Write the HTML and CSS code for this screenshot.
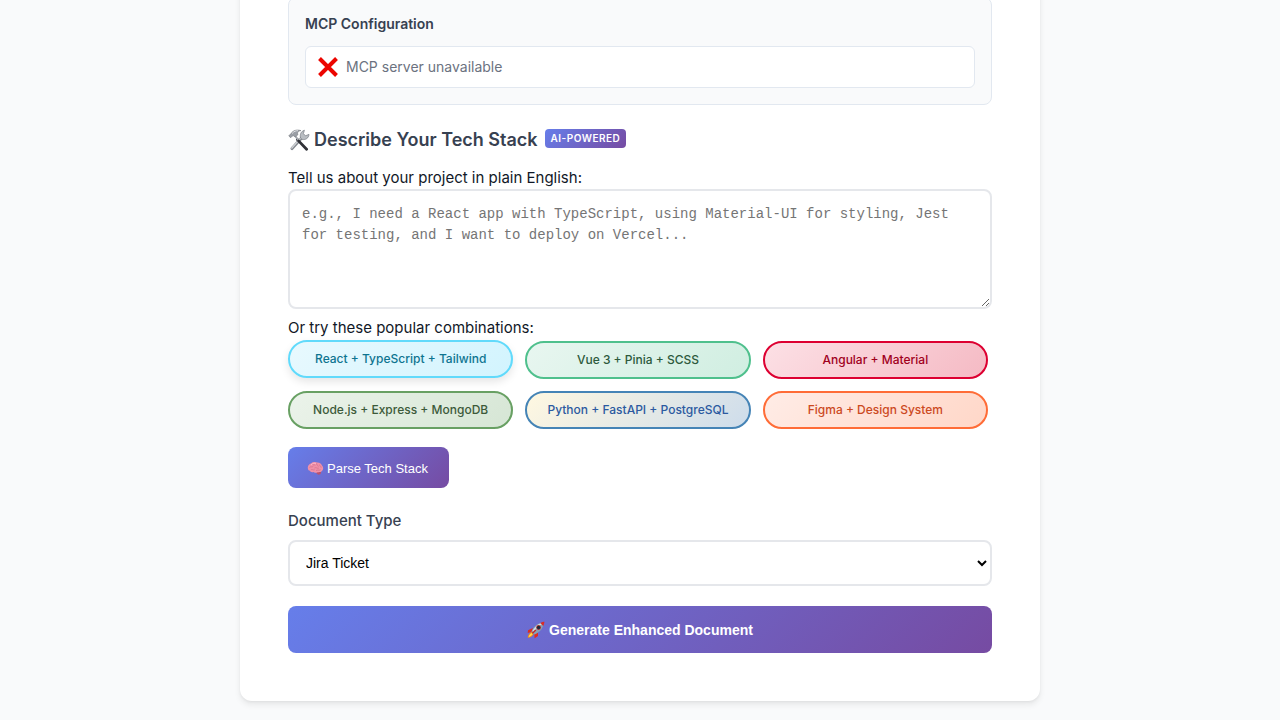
FILE: index.html
```html
<!DOCTYPE html>
<html lang="en">
<head>
<meta charset="utf-8">
<meta name="viewport" content="width=device-width, initial-scale=1">
<title>Document Generator</title>
<link rel="stylesheet" href="styles.css">
</head>
<body>
<main class="card">
  <section class="config">
    <h4 class="config-title">MCP Configuration</h4>
    <div class="status">
      <svg class="icon-cross" viewBox="0 0 22 22" aria-hidden="true"><path d="M2.5 2.5 L19.5 19.5 M19.5 2.5 L2.5 19.5" stroke="#ec0500" stroke-width="4" fill="none"/></svg>
      <span>MCP server unavailable</span>
    </div>
  </section>

  <h3 class="heading">
    <svg class="icon-tools" viewBox="0 0 22 22" aria-hidden="true">
      <path d="M4 19.6 L14 8.6" stroke="#85898f" stroke-width="3" stroke-linecap="round"/>
      <path d="M3.8 19 L13.6 8.2" stroke="#d3d6da" stroke-width="1.2" stroke-linecap="round"/>
      <path d="M12.6 9.2 C11.6 5.6 13 2.2 16.4 1.2 L15.4 4.6 L17.4 6.8 L21 5.4 C20.8 9 17.6 11.2 14.2 10.4 Z" fill="#b9bdc2" stroke="#777b82" stroke-width=".7"/>
      <path d="M9.4 10.6 L18.6 20.2" stroke="#303137" stroke-width="2.8" stroke-linecap="round"/>
      <path d="M7.2 7 L10.2 10.8" stroke="#a4a8ae" stroke-width="2"/>
      <path d="M.8 6.8 L3 4.6 C5 1.4 8.5 .3 13 1.6 C10.4 2 9.5 3 9.6 4.6 L10 5.6 L7.2 8 L5.6 6.8 L4.4 7 L2.6 8.8 Z" fill="#9a9ea5" stroke="#74787e" stroke-width=".6"/>
      <path d="M4 4.6 C6 2.2 8 1.6 10 1.7" stroke="#dfe1e4" stroke-width="1" fill="none"/>
    </svg>
    <span>Describe Your Tech Stack</span>
    <span class="badge">AI-POWERED</span>
  </h3>

  <label class="prompt" for="stack">Tell us about your project in plain English:</label>
  <textarea class="stack-input" id="stack" placeholder="e.g., I need a React app with TypeScript, using Material-UI for styling, Jest for testing, and I want to deploy on Vercel..."></textarea>

  <p class="prompt prompt-examples">Or try these popular combinations:</p>
  <div class="chips">
    <button type="button" class="chip chip-react">React + TypeScript + Tailwind</button>
    <button type="button" class="chip chip-vue">Vue 3 + Pinia + SCSS</button>
    <button type="button" class="chip chip-angular">Angular + Material</button>
    <button type="button" class="chip chip-node">Node.js + Express + MongoDB</button>
    <button type="button" class="chip chip-python">Python + FastAPI + PostgreSQL</button>
    <button type="button" class="chip chip-figma">Figma + Design System</button>
  </div>

  <button type="button" class="parse">
    <svg class="icon-brain" viewBox="0 0 17 15" aria-hidden="true">
      <path d="M9 11 L14 10.5 C14.5 12.5 13 13.8 11.3 13.8 L9.8 12.8 Z" fill="#b9526e"/>
      <path d="M1 8 C.2 5.6 1.8 3.2 4 2.5 C5.6 .9 8.6 .8 10.3 1.6 C12.8 1.5 14.6 3 15 4.6 C16.6 6.2 16.5 8.6 15.2 9.8 C14.2 11.4 12 11.2 10.6 11.2 C9.4 12.2 7.6 12 6.8 11 C4.8 11.6 3.2 11 2.9 9.8 C1.8 9.7 1.2 9 1 8 Z" fill="#f090a8"/>
      <path d="M2.5 6.5 C4 5 5 6.7 6.3 5.2 M5 3.2 C6 4.4 7.4 3.2 8.3 4.4 M9.6 2.3 C9 4 11.3 4 11.4 5.6 M12.6 3.6 C12.6 5 14.2 5.3 14.2 6.7 M7.4 7 C9 6 10 7.6 11.8 7.2 M3.8 9 C5.3 7.8 6.2 9.6 7.7 8.8 M9 9.6 C10.6 8.5 12 9.8 13.6 8.7" stroke="#cf6685" stroke-width=".6" fill="none"/>
      <path d="M4 4 C5.4 2.4 7.6 2 9 2.4" stroke="#ffc2cf" stroke-width=".8" fill="none"/>
    </svg>
    <span>Parse Tech Stack</span>
  </button>

  <label class="field-label" for="doctype">Document Type</label>
  <select class="doctype" id="doctype"><option>Jira Ticket</option></select>

  <button type="button" class="generate">
    <svg class="icon-rocket" viewBox="0 0 18 18" aria-hidden="true">
      <path d="M5.2 10.6 L6.8 12.8 C5.6 15.5 3 16.8 .8 17 C.6 14.6 2 11.8 5.2 10.6 Z" fill="#f5881f"/>
      <path d="M4.6 12 L5.7 13.3 C4.6 14.8 3 15.8 1.7 16 C1.9 14.4 3 12.8 4.6 12 Z" fill="#ffe14a"/>
      <path d="M6 7 L1 9.2 L.7 12 L5 10.8 Z" fill="#df2b20"/>
      <path d="M11 11.8 L11 15 L7.6 17.2 L7.3 12.8 Z" fill="#df2b20"/>
      <path d="M4.5 10.7 C6 6.4 10 2.8 14 1.8 L16.3 4.2 C15.2 8.4 11.5 12.2 7.2 13.4 Z" fill="#86a3b4"/>
      <path d="M5.6 9.6 C7.5 6 10.5 3.3 14 2.2 L15 3.2 C11.5 5 8.5 8 6.5 11.2 Z" fill="#cfdde4"/>
      <path d="M13.3 2 C14.8 1.1 16.2 .8 17.4 .8 C17.4 2.2 17 3.6 16.2 5 Z" fill="#d92b25"/>
      <circle cx="11.6" cy="6.5" r="2.4" fill="#b93135"/>
      <circle cx="11.6" cy="6.5" r="1.7" fill="#1c2b3d"/>
      <path d="M5.4 12.3 L8.8 9" stroke="#c02525" stroke-width="1.4"/>
    </svg>
    <span>Generate Enhanced Document</span>
  </button>
</main>
</body>
</html>
```
FILE: styles.css
```css
* { box-sizing: border-box; }

body {
  margin: 0;
  padding-bottom: 19px;
  background: #f9fafb;
  color: #111827;
  font: 16px/24px Inter, "Liberation Sans", sans-serif;
}

button { cursor: pointer; }
svg { flex: none; }

.card {
  display: flex;
  flex-direction: column;
  max-width: 800px;
  margin: -51px auto 0;
  padding: 48px;
  background: #fff;
  border-radius: 12px;
  box-shadow: 0 4px 6px rgba(0, 0, 0, .07), 0 1px 3px rgba(0, 0, 0, .05);
}

.config {
  padding: 16px;
  background: #f9fafb;
  border: 1px solid #e2e8f0;
  border-radius: 8px;
}

.config-title {
  margin: 0 0 12px;
  color: #374151;
  font-size: 14px;
  font-weight: 600;
  line-height: 20px;
}

.status {
  display: flex;
  align-items: center;
  gap: 7px;
  padding: 8px 11px;
  background: #fff;
  border: 1px solid #e2e8f0;
  border-radius: 6px;
  color: #6b7280;
  font-size: 14px;
}

.icon-cross { width: 22px; height: 22px; }

.heading {
  display: flex;
  align-items: center;
  margin: 21px 0 12px;
  color: #374151;
  font-size: 18px;
  font-weight: 600;
  line-height: 28px;
}

.icon-tools { width: 22px; height: 22px; margin-right: 4px; }

.badge {
  margin: 0 0 3px 7px;
  padding: 0 6px;
  border-radius: 4px;
  background: linear-gradient(135deg, #667eea, #764ba2);
  color: #fff;
  font-size: 10px;
  line-height: 19px;
  letter-spacing: 0.5px;
}

.prompt { margin: 0; font-size: 15px; }
.prompt-examples { margin: 7px 0 2px; }
label.prompt { margin-bottom: -1px; }

.stack-input {
  display: block;
  width: 100%;
  height: 120px;
  padding: 13px 12px 12px;
  border: 2px solid #e5e7eb;
  border-radius: 8px;
  background: #fff;
  font: 14px/21px "Liberation Mono", monospace;
  resize: vertical;
}

.stack-input::placeholder { color: #757575; }

.chips {
  display: grid;
  grid-template-columns: repeat(3, 1fr);
  gap: 12px;
  margin-top: -1px;
  padding-right: 4px;
}

.chip {
  padding: 8px 12px;
  border: 2px solid;
  border-radius: 20px;
  font: 500 12px/18px Inter, "Liberation Sans", sans-serif;
}

.chip-react {
  background: linear-gradient(135deg, #e8f9fe, #d2f4fe);
  border-color: #61dafb;
  color: #0e7490;
  box-shadow: 0 4px 8px rgba(0, 0, 0, .1);
  transform: translateY(-1px);
}
.chip-vue { background: linear-gradient(135deg, #e8f6f0, #d0eee1); border-color: #4fc08d; color: #2d5a3d; }
.chip-angular { background: linear-gradient(135deg, #fce0e5, #f5bac4); border-color: #dd0031; color: #a0001c; }
.chip-node { background: linear-gradient(135deg, #ebf3ea, #d6e6d5); border-color: #68a063; color: #3c5a3a; }
.chip-python { background: linear-gradient(135deg, #fff8e1, #cddceb); border-color: #4584b6; color: #2c5aa0; }
.chip-figma { background: linear-gradient(135deg, #ffece6, #ffd7c8); border-color: #ff6c37; color: #cc4a1f; }

.parse, .generate {
  display: flex;
  align-items: center;
  justify-content: center;
  border: 0;
  border-radius: 8px;
  background: linear-gradient(135deg, #667eea, #764ba2);
  color: #fff;
  font-family: "Liberation Sans", Arial, sans-serif;
}

.parse {
  align-self: flex-start;
  gap: 3px;
  margin-top: 18px;
  padding: 14px 21px 12px 19px;
  font-size: 13px;
  line-height: 15px;
}

.icon-brain { width: 17px; height: 15px; }

.field-label {
  margin: 21px 0 8px;
  color: #374151;
  font-size: 15px;
  font-weight: 500;
}

.doctype {
  width: 100%;
  height: 46px;
  margin-top: -1px;
  padding: 12px;
  border: 2px solid #e5e7eb;
  border-radius: 8px;
  background: #fff;
  color: #000;
  font: 14px "Liberation Sans", Arial, sans-serif;
}

.generate {
  gap: 4px;
  margin-top: 20px;
  padding: 16px 24px 14px;
  font-size: 14px;
  font-weight: 600;
  line-height: 17px;
}

.icon-rocket { width: 18px; height: 18px; margin: -2px 0 0; }
```
